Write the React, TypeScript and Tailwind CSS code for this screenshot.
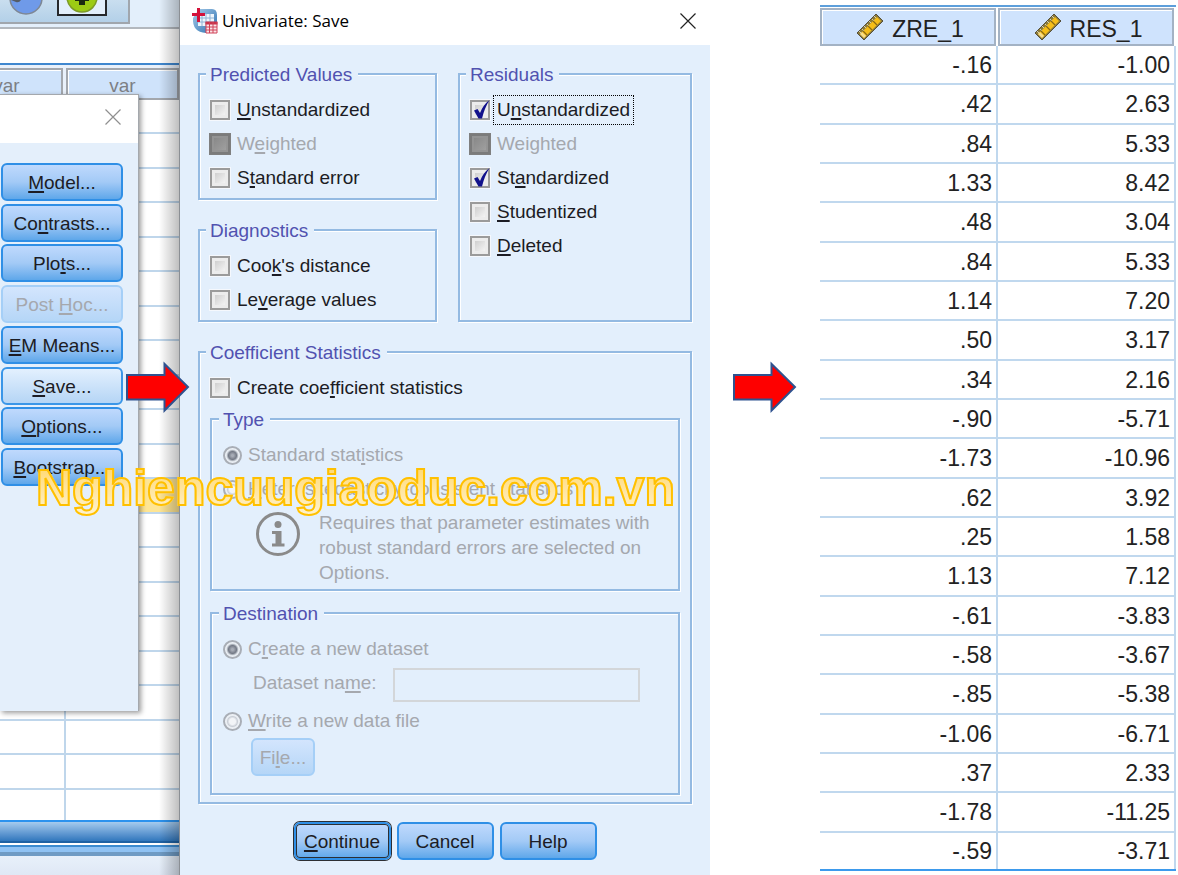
import { ReactNode, useState } from "react";

type MenuItem = { label: string; state?: "active" | "disabled" };

// "&" marks the keyboard mnemonic, as in the native resource strings
const MENU: MenuItem[] = [
  { label: "&Model..." },
  { label: "Co&ntrasts..." },
  { label: "Plo&ts..." },
  { label: "Post &Hoc...", state: "disabled" },
  { label: "&EM Means..." },
  { label: "&Save...", state: "active" },
  { label: "&Options..." },
  { label: "&Bootstrap..." },
];

const ROWS = [
  ["-.16", "-1.00"],
  [".42", "2.63"],
  [".84", "5.33"],
  ["1.33", "8.42"],
  [".48", "3.04"],
  [".84", "5.33"],
  ["1.14", "7.20"],
  [".50", "3.17"],
  [".34", "2.16"],
  ["-.90", "-5.71"],
  ["-1.73", "-10.96"],
  [".62", "3.92"],
  [".25", "1.58"],
  ["1.13", "7.12"],
  ["-.61", "-3.83"],
  ["-.58", "-3.67"],
  ["-.85", "-5.38"],
  ["-1.06", "-6.71"],
  [".37", "2.33"],
  ["-1.78", "-11.25"],
  ["-.59", "-3.71"],
];

const SELECTED_ROW = 11;

function Mnemonic({ text }: { text: string }) {
  const at = text.indexOf("&");
  if (at < 0) return <>{text}</>;
  return (
    <>
      {text.slice(0, at)}
      <u className="underline decoration-2 underline-offset-2">{text[at + 1]}</u>
      {text.slice(at + 2)}
    </>
  );
}

function Group({ title, className = "", children }: { title: string; className?: string; children: ReactNode }) {
  return (
    <fieldset
      className={`min-w-0 border-2 border-[#94bae2] shadow-[1px_1px_0_#fff,inset_1px_1px_0_#fff] ${className}`}
    >
      <legend className="-ml-1 bg-[#e3effc] pl-1 pr-1.5 pt-0.5 leading-[22px] text-[#5152b0]">{title}</legend>
      {children}
    </fieldset>
  );
}

function Check({
  label,
  checked = false,
  disabled,
  focused,
}: {
  label: string;
  checked?: boolean;
  disabled?: boolean;
  focused?: boolean;
}) {
  const [on, setOn] = useState(checked);
  return (
    <label className={`flex h-[34px] items-center gap-[7px] ${disabled ? "text-[#a5a8ae]" : "text-[#1c1c24]"}`}>
      <span className="relative flex shrink-0">
        <input
          type="checkbox"
          checked={on}
          disabled={disabled}
          onChange={(e) => setOn(e.target.checked)}
          className="size-5 appearance-none border-2 border-[#9b9b9b] bg-linear-to-br from-[#c4c4c4] to-white shadow-[0_0_0_1px_#f5f8fd,inset_0_0_0_3px_#ececec] disabled:border-[#7b7b7b] disabled:from-[#858585] disabled:to-[#a3a3a3] disabled:shadow-[0_0_0_1px_#7f7f7f,inset_0_0_0_2px_#949494]"
        />
        {on && (
          <svg viewBox="0 0 20 20" className="pointer-events-none absolute inset-0 size-5 overflow-visible">
            <path d="M4 10.500 L7.500 9 L10 13 Q13 5 19.500 0 Q14.500 8 12 18.500 L8.500 18.500 Z" fill="#12128c" />
          </svg>
        )}
      </span>
      <span className={`leading-[22px] ${focused ? "outline-1 outline-offset-3 outline-dotted outline-black" : ""}`}>
        <Mnemonic text={label} />
      </span>
    </label>
  );
}

function Radio({ label, name, checked }: { label: string; name: string; checked?: boolean }) {
  return (
    <label className="flex h-[34px] items-center gap-1.5 text-[#a5a8ae]">
      <input
        type="radio"
        name={name}
        defaultChecked={checked}
        disabled
        className="size-[19px] shrink-0 appearance-none rounded-full border-2 border-[#a9aeb6] bg-[radial-gradient(circle,#f2f4f7_0_3px,#c9ced6_5px,#e9edf2_6px)] shadow-[inset_0_0_0_1px_#eef2f7] checked:bg-[radial-gradient(circle,#a7acb6_0_1px,#747a86_4px,#dfe4ea_6px)]"
      />
      <span className="whitespace-nowrap">
        <Mnemonic text={label} />
      </span>
    </label>
  );
}

function PushButton({ label, state, className = "" }: MenuItem & { className?: string }) {
  const look =
    state === "disabled"
      ? "border-[#a5cff7] from-[#d3e5fd] to-[#b5d6f7] text-[#a5a8ae]"
      : state === "active"
        ? "border-[#3a96e8] from-[#e3f0fe] to-[#b5d5f5] text-[#1c1c24]"
        : "border-[#2f8fe6] from-[#bfd9fd] via-[#a3caf6] to-[#5ea7ea] text-[#1c1c24]";
  return (
    <button
      type="button"
      disabled={state === "disabled"}
      className={`h-[38px] rounded-md border-2 bg-linear-to-b pt-0.5 leading-[22px] whitespace-nowrap ${look} ${className}`}
    >
      <Mnemonic text={label} />
    </button>
  );
}

function Arrow({ className = "" }: { className?: string }) {
  return (
    <svg viewBox="0 0 64 52" className={`h-[52px] w-16 shrink-0 ${className}`}>
      <path d="M1 14 H38.500 V3 L62 26 L38.500 49.500 V38.500 H1 Z" fill="#fe0000" stroke="#2f528f" strokeWidth="2" />
    </svg>
  );
}

function CloseIcon() {
  return (
    <svg viewBox="0 0 16 16" className="size-4" stroke="currentColor" strokeWidth="1.2">
      <path d="M0.500 0.500 L15.500 15.500 M15.500 0.500 L0.500 15.500" />
    </svg>
  );
}

function AppIcon() {
  return (
    <svg viewBox="0 0 26 26" className="size-[26px]">
      <defs>
        <linearGradient id="globe" x1="0" y1="0" x2="1" y2="1">
          <stop offset="0" stopColor="#a9cdea" />
          <stop offset="1" stopColor="#2a6fb0" />
        </linearGradient>
      </defs>
      <path d="M7 1 H20 Q25 1 25 7 V15 H14 V25 Q0 24 1 10 Z" fill="url(#globe)" />
      <path d="M6 6 H22 V18 H6 Z" fill="#eef5fb" />
      <path d="M6 10 H22 M6 14 H22 M10 6 V18 M14 6 V18 M18 6 V18" stroke="#8fb4d6" />
      <path d="M14 14 H25 V25 H14 Z" fill="#fbe3e6" />
      <path d="M13.500 13.500 H25.500 V16.500 H13.500 Z" fill="#c8324a" />
      <path d="M14 19 H25 M14 22 H25 M14 25 H25 M14 14 V25 M17.500 14 V25 M21 14 V25 M25 14 V25" stroke="#cf4258" />
      <path d="M6.500 0 V14 M0 6.500 H13" stroke="#d3123a" strokeWidth="3" />
    </svg>
  );
}

function RulerIcon() {
  return (
    <svg viewBox="0 0 28 28" className="size-7">
      <path d="M1 20 L20 1 L27 8 L8 27 Z" fill="#8b7a3a" />
      <path d="M4 21 L21 4 L25 8 L8 25 Z" fill="#f6be18" />
      <path d="M4 21 L8 25 L10 23 L6 19 Z" fill="#f7dc8a" />
      <path d="M7 18 L11 22 M12 13 L16 17 M17 8 L21 12" stroke="#8a6a14" strokeWidth="1.200" />
      <path d="M3 18 L5 20 M5.500 15.500 L7.500 17.500 M8 13 L10 15 M10.500 10.500 L12.500 12.500 M13 8 L15 10 M15.500 5.500 L17.500 7.500 M18 3 L20 5" stroke="#d8d2b4" strokeWidth="1" />
      <path d="M1 20 L20 1 L27 8 L8 27 Z" fill="none" stroke="#57503a" strokeWidth="1" />
    </svg>
  );
}

function InfoIcon() {
  return (
    <svg viewBox="0 0 44 44" className="mt-0.5 size-11 shrink-0">
      <circle cx="22" cy="22" r="20.500" fill="none" stroke="#8a8a8a" strokeWidth="3" />
      <circle cx="22" cy="12.500" r="3.500" fill="#8a8a8a" />
      <path d="M16 19 H25.500 V31.500 H28.500 V34.500 H16 V31.500 H19.500 V22 H16 Z" fill="#8a8a8a" />
    </svg>
  );
}

function DataSheet() {
  return (
    <div className="flex min-w-0 flex-1 flex-col">
      <div className="h-[29px] border-b-2 border-[#b3b8be] bg-[#e3effb]">
        <div className="flex h-6 w-[130px] border-r-2 border-b-2 border-[#a0a6ad] bg-linear-to-b from-[#c9deef] to-[#b3d0e8]">
          <svg viewBox="0 0 34 15" className="ml-[9px] h-[15px] w-[34px]">
            <circle cx="17" cy="-2" r="16" fill="#6f9ae9" stroke="#7e8794" strokeWidth="1.500" />
            <path d="M2 0 H12 Q10 3 7 2 Z" fill="#555c66" />
          </svg>
          <span className="ml-3.5 flex h-4 w-[50px] justify-center border-2 border-t-0 border-[#26282b] bg-[#e3effb]">
            <svg viewBox="0 0 34 14" className="h-3.5 w-[34px]">
              <circle cx="17" cy="-3" r="15" fill="#9ccb14" stroke="#7d9a26" strokeWidth="1.500" />
              <path d="M10 0 H24 V1 H20 V5 H14 V1 H10 Z" fill="#1c2a10" />
            </svg>
          </span>
        </div>
      </div>
      <div className="h-9 border-b-2 border-[#3f87cf] bg-white" />
      <div className="flex h-[35px] justify-end gap-[3px] overflow-hidden bg-[#e9f1fb] pt-[3px]">
        {[0, 1].map((i) => (
          <div
            key={i}
            className="flex w-[113px] shrink-0 items-center justify-center border-2 border-[#a3a7ad] bg-[#cfe3fb] pt-1 text-[#7d7f84] shadow-[inset_1px_1px_0_#fff]"
          >
            var
          </div>
        ))}
      </div>
      <div className="grid flex-1 grid-rows-[repeat(20,minmax(0,34fr))_minmax(0,30fr)] bg-white">
        {Array.from({ length: 21 }, (_, i) => (
          <div
            key={i}
            className={`border-[#bfd6eb] ${i < 20 ? "border-b-2" : ""} ${i === SELECTED_ROW ? "bg-[#fee594]" : ""}`}
          >
            <div className="h-full w-[66px] border-r-2 border-[#bfd6eb]" />
          </div>
        ))}
      </div>
      <div className="h-[23px] border-t-2 border-b-2 border-t-[#2b92ee] border-b-[#1f62a3] bg-linear-to-b from-[#a5cbee] to-[#3077bd]" />
      <div className="mt-0.5 h-[11px] border-t-2 border-b-4 border-t-[#3b8bd0] border-b-[#6f9bc4] bg-[#8fc2f3]" />
      <div className="h-[19px] bg-linear-to-b from-[#e8f0fa] to-[#dfe8f5]" />
    </div>
  );
}

function ParentDialog() {
  return (
    <section className="absolute top-[94px] left-0 h-[617px] w-[139px] border-t border-r border-[#a4a8ad] bg-[#e4effb] shadow-[2px_2px_5px_rgba(0,0,0,0.4)]">
      <div className="flex h-12 items-center justify-end bg-white pr-[17px] pb-1 text-[#8f8f8f]">
        <button type="button" aria-label="Close">
          <CloseIcon />
        </button>
      </div>
      <div className="mt-5 ml-px flex h-[323px] w-[122px] flex-col justify-between">
        {MENU.map((item) => (
          <PushButton key={item.label} {...item} />
        ))}
      </div>
    </section>
  );
}

function SaveDialog() {
  return (
    <section className="flex min-w-0 flex-col border-l border-[#8b8f94] bg-[#e3effc]">
      <header className="flex h-[45px] items-center bg-white pr-[14px] pb-1 pl-3">
        <AppIcon />
        <h1 className="ml-1 flex-1 font-['Open_Sans','Noto_Sans',sans-serif] text-[17px] text-black">
          Univariate: Save
        </h1>
        <button type="button" aria-label="Close" className="text-[#222]">
          <CloseIcon />
        </button>
      </header>

      <form className="px-[18px] pt-[17px] pb-[15px]" onSubmit={(e) => e.preventDefault()}>
        <div className="grid grid-cols-[239fr_234fr] gap-[21px]">
          <div className="flex min-w-0 flex-col gap-[18px]">
            <Group title="Predicted Values" className="px-2.5 pt-[7px] pb-[3px]">
              <Check label="&Unstandardized" />
              <Check label="W&eighted" disabled />
              <Check label="S&tandard error" />
            </Group>
            <Group title="Diagnostics" className="px-2.5 pt-[7px] pb-[3px]">
              <Check label="Coo&k's distance" />
              <Check label="Le&verage values" />
            </Group>
          </div>
          <Group title="Residuals" className="px-2.5 pt-[7px] pb-[3px]">
            <Check label="U&nstandardized" checked focused />
            <Check label="Wei&ghted" disabled />
            <Check label="St&andardized" checked />
            <Check label="&Studentized" />
            <Check label="&Deleted" />
          </Group>
        </div>

        <Group title="Coefficient Statistics" className="mt-[18px] px-2.5 pt-[7px] pb-[7px]">
          <Check label="Create coe&fficient statistics" />
          <Group title="Type" className="mt-0.5 px-[11px] pt-[7px] pb-1">
            <Radio name="type" label="Standard stat&istics" checked />
            <Radio name="type" label="&Heteroskedasticity-consistent statistics" />
            <div className="mt-1 ml-[33px] flex gap-[19px] text-[#a5a8ae]">
              <InfoIcon />
              <p className="leading-[25px]">
                Requires that parameter estimates with robust standard errors are selected on Options.
              </p>
            </div>
          </Group>
          <Group title="Destination" className="mt-2.5 px-[11px] pt-[7px] pb-[17px]">
            <Radio name="destination" label="C&reate a new dataset" checked />
            <div className="my-0.5 mr-[27px] ml-[30px] flex items-center gap-4 text-[#a5a8ae]">
              <label htmlFor="dataset-name" className="pb-1 whitespace-nowrap">
                <Mnemonic text="Dataset na&me:" />
              </label>
              <input
                id="dataset-name"
                type="text"
                disabled
                className="h-[34px] min-w-0 flex-1 border-2 border-[#d3d6d9] bg-transparent px-2"
              />
            </div>
            <Radio name="destination" label="&Write a new data file" />
            <PushButton label="Fi&le..." state="disabled" className="ml-7 w-16" />
          </Group>
        </Group>

        <div className="mt-[18px] flex justify-center gap-1.5">
          <PushButton
            label="&Continue"
            className="w-[97px] shadow-[inset_0_0_0_1px_#2d2f33,0_0_0_1px_#2d2f33]"
          />
          <PushButton label="Cancel" className="w-[97px]" />
          <PushButton label="Help" className="w-[97px]" />
        </div>
      </form>
    </section>
  );
}

function ResultTable() {
  return (
    <div className="min-w-0 pt-[5px] pr-0.5">
      <table className="w-full table-fixed border-separate border-spacing-0 border-t-2 border-b-2 border-t-[#5d9fdb] border-b-[#3d9aec] text-[23px] leading-7 text-[#222]">
        <thead>
          <tr>
            {["ZRE_1", "RES_1"].map((name) => (
              <th key={name} className="h-[39px] pt-px pr-0.5 font-normal">
                <div className="flex h-[38px] items-center justify-center gap-2 border-2 border-[#a3b2c4] bg-[#cfe3fd] pl-1 shadow-[inset_1px_1px_0_#fff]">
                  <RulerIcon />
                  <span className="pt-1">{name}</span>
                </div>
              </th>
            ))}
          </tr>
        </thead>
        <tbody>
          {ROWS.map((row, i) => (
            <tr key={i} className="group">
              {row.map((value, j) => (
                <td
                  key={j}
                  className="h-[39px] border-r-2 border-b-2 border-[#c0d8ee] pr-1 text-right group-last:h-9 group-last:border-b-0 group-nth-[3n+2]:h-10"
                >
                  {value}
                </td>
              ))}
            </tr>
          ))}
        </tbody>
      </table>
    </div>
  );
}

export default function App() {
  return (
    <main className="relative grid min-h-screen grid-cols-[179fr_531fr_110fr_358fr] overflow-hidden bg-white font-['Liberation_Sans',Arial,sans-serif] text-[19px]">
      <div className="relative flex min-w-0">
        <DataSheet />
        <div className="pointer-events-none absolute inset-y-0 right-0 w-5 bg-linear-to-l from-black/25 to-transparent" />
        <ParentDialog />
        <Arrow className="absolute top-[361px] left-[126px] z-10" />
      </div>
      <SaveDialog />
      <div className="flex items-start justify-center pt-[361px]">
        <Arrow />
      </div>
      <ResultTable />
      <p className="pointer-events-none absolute top-[460px] left-9 z-20 bg-linear-to-b from-[#ffd560] to-[#fff3d0] bg-clip-text text-[50px] leading-[56px] font-bold text-transparent [-webkit-text-stroke:2px_#ffc000]">
        Nghiencuugiaoduc.com.vn
      </p>
    </main>
  );
}
